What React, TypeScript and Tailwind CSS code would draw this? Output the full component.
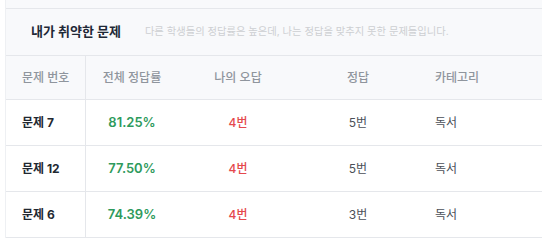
import React from 'react';

interface WeakItem {
  id: number;
  title: string;
  rate: string;
  mine: string;
  answer: string;
  category: string;
}

const items: WeakItem[] = [
  { id: 7, title: '문제 7', rate: '81.25%', mine: '4번', answer: '5번', category: '독서' },
  { id: 12, title: '문제 12', rate: '77.50%', mine: '4번', answer: '5번', category: '독서' },
  { id: 6, title: '문제 6', rate: '74.39%', mine: '4번', answer: '3번', category: '독서' },
];

const cols = 'grid grid-cols-[80px_92px_120px_120px_1fr]';

export default function App() {
  return (
    <div className="w-[542px] h-[246px] bg-white overflow-hidden font-['Inter','Noto_Sans_CJK_KR',sans-serif]">
      <div className="ml-[5px] border-l border-[#eef0f3]">
        <div className="h-[9px] bg-[#f8f9fb] border-b border-[#e5e7eb]" />

        {/* section header */}
        <div className="h-[47px] flex items-center pl-[25px] bg-[#f8f9fb] border-b border-[#e5e7eb]">
          <h3 className="text-[13px] font-bold text-[#1f2937]">내가 취약한 문제</h3>
          <p className="ml-[24px] text-[10.3px] text-[#cdcfd2]">
            다른 학생들의 정답률은 높은데, 나는 정답을 맞추지 못한 문제들입니다.
          </p>
        </div>

        {/* table head */}
        <div className={`${cols} h-[44px] bg-[#f8f9fb] border-b border-[#e5e7eb] text-[12px] text-[#8f959d] font-medium`}>
          <div className="flex items-center pl-[16px] border-r border-[#e5e7eb]">문제 번호</div>
          <div className="flex items-center justify-center">전체 정답률</div>
          <div className="flex items-center justify-center">나의 오답</div>
          <div className="flex items-center justify-center">정답</div>
          <div className="flex items-center pl-[17px]">카테고리</div>
        </div>

        {/* rows */}
        {items.map((item) => (
          <div key={item.id} className={`${cols} h-[46px] border-b border-[#e5e7eb] text-[12px]`}>
            <div className="flex items-center pl-[16px] border-r border-[#e5e7eb] font-bold text-[#222831]">
              {item.title}
            </div>
            <div className="flex items-center justify-center text-[13px] font-semibold text-[#2e9a5c]">{item.rate}</div>
            <div className="flex items-center justify-center font-medium text-[#e5484d]">{item.mine}</div>
            <div className="flex items-center justify-center text-[#4b5058]">{item.answer}</div>
            <div className="flex items-center pl-[17px] text-[#4b5058]">{item.category}</div>
          </div>
        ))}
      </div>
    </div>
  );
}
